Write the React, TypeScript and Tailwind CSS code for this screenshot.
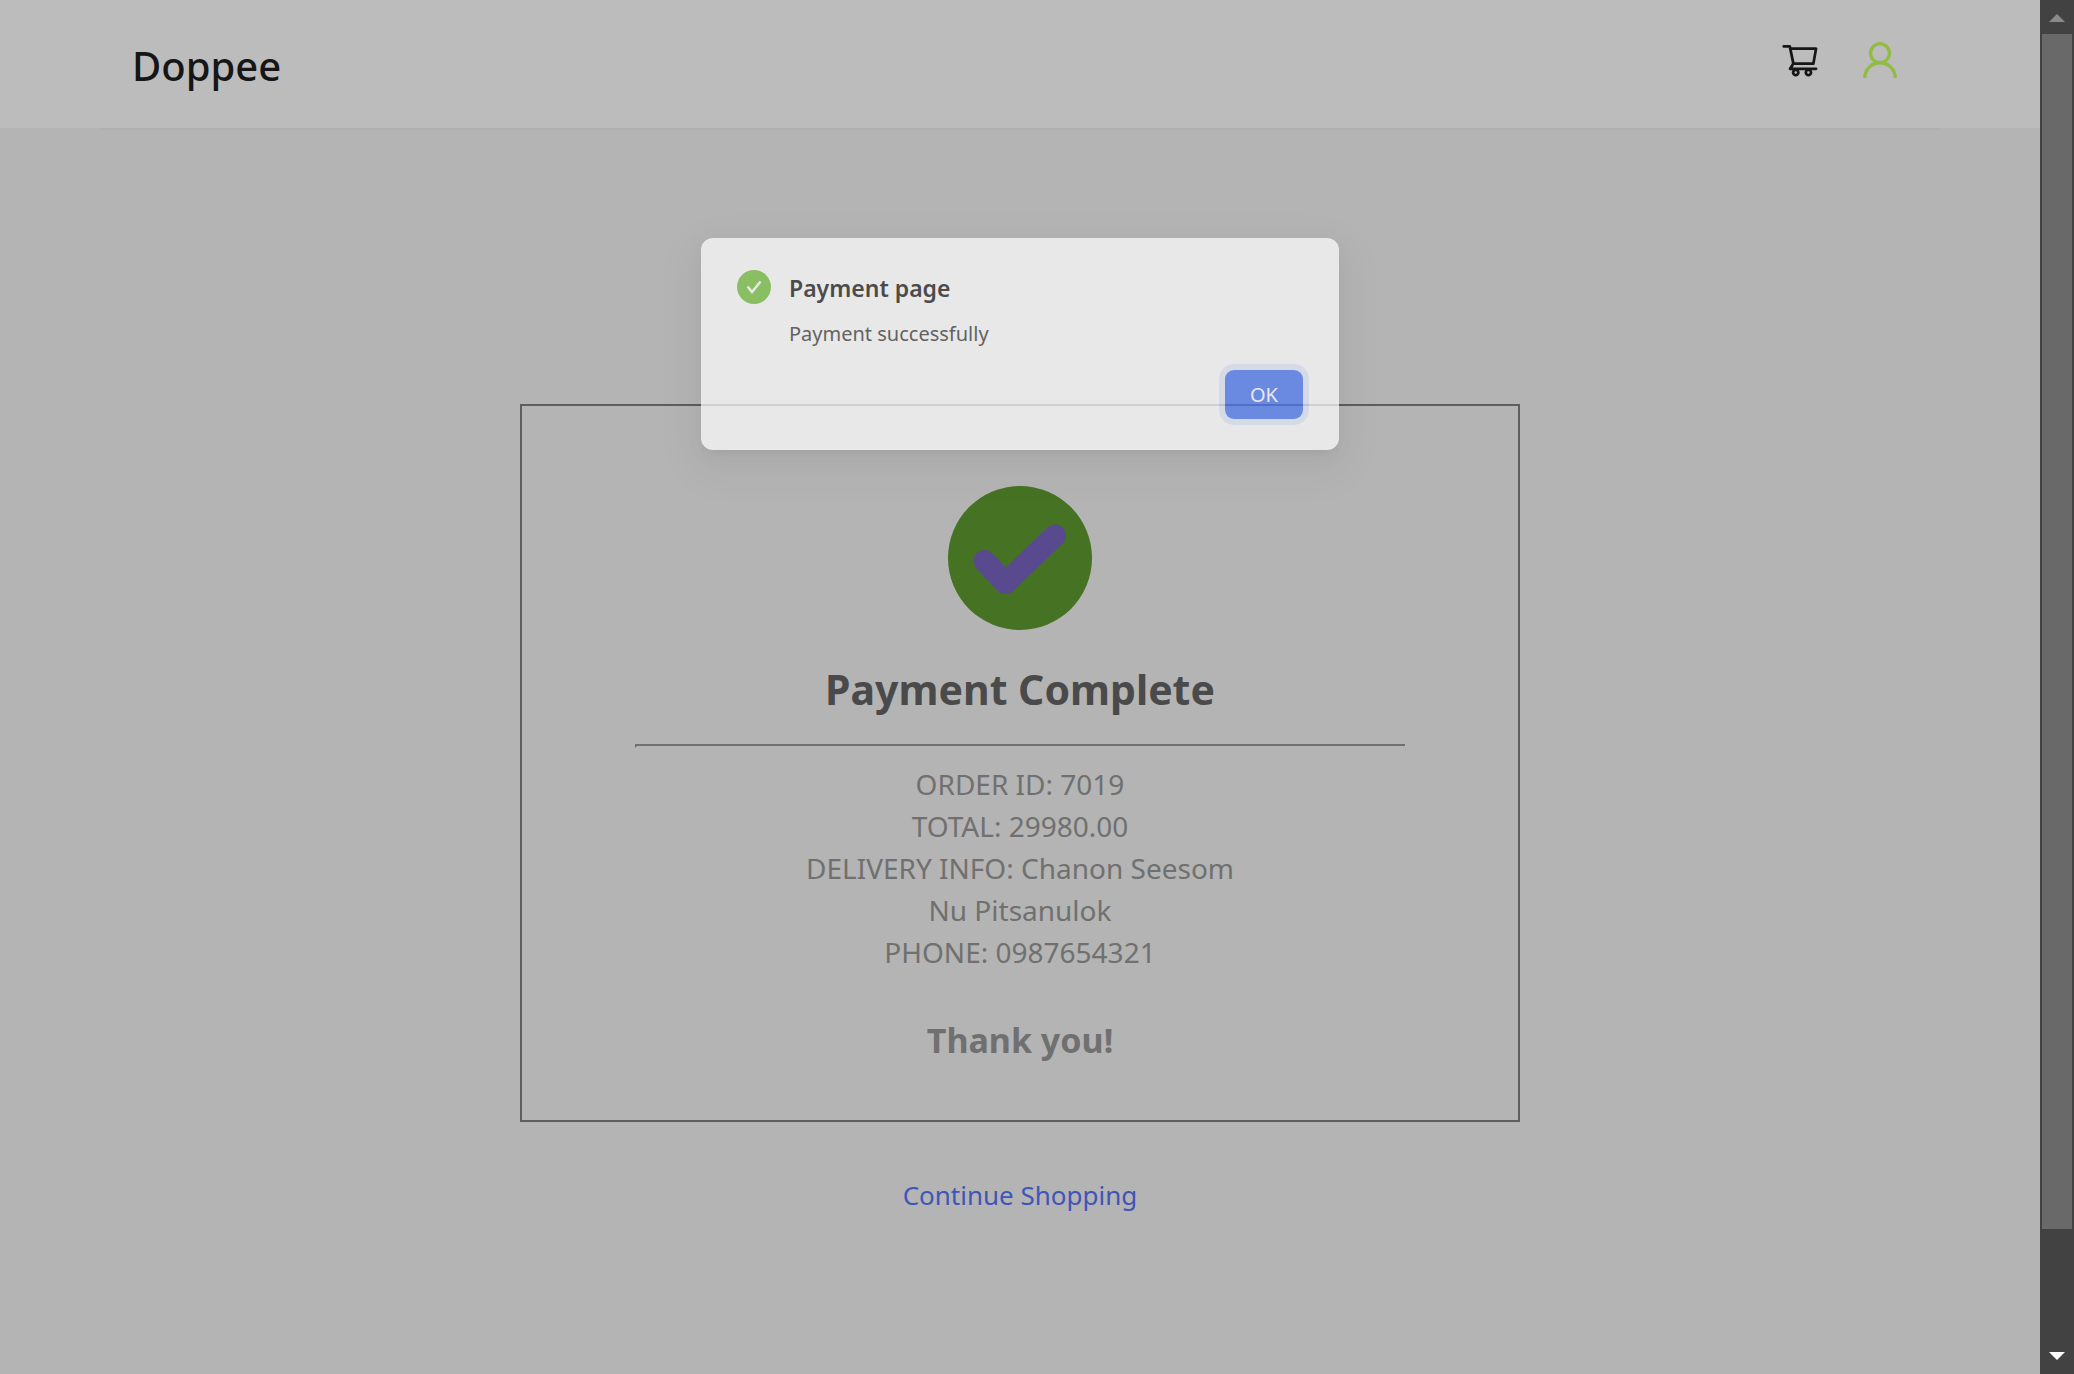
import { AiOutlineShoppingCart, AiOutlineUser } from "react-icons/ai";

const orderLines = [
  "ORDER ID: 7019",
  "TOTAL: 29980.00",
  "DELIVERY INFO: Chanon Seesom",
  "Nu Pitsanulok",
  "PHONE: 0987654321",
];

function Header() {
  return (
    <header>
      <div className="flex h-32 items-start justify-between bg-[#bcbcbc] px-[132px]">
        <a href="#home" className="pt-9 text-[40px] leading-[60px] font-medium text-[#161616]">
          Doppee
        </a>
        <nav className="flex items-center gap-[37px] pt-[37px] pr-[5px]">
          <a href="#cart" aria-label="Shopping cart" className="text-[#161616]">
            <AiOutlineShoppingCart size={40} />
          </a>
          <a href="#account" aria-label="Account" className="text-[#91bd43]">
            <AiOutlineUser size={46} />
          </a>
        </nav>
      </div>
      <div className="mx-[100px] h-0.5 bg-[#b0b0b0]" />
    </header>
  );
}

function Receipt() {
  return (
    <section className="flex w-full max-w-[1000px] flex-col items-center border-2 border-[#5e5e5e] pt-20 pb-[55px] text-center">
      <svg viewBox="0 0 144 144" className="size-36" aria-hidden="true">
        <circle cx="72" cy="72" r="72" fill="#457223" />
        <path
          d="M36.5 75 57.5 97 107 49.5"
          fill="none"
          stroke="#594a8f"
          strokeWidth="22"
          strokeLinecap="round"
          strokeLinejoin="round"
        />
      </svg>
      <h1 className="mt-[31px] text-[41px] leading-[56px] font-bold text-[#4a4a4a]">Payment Complete</h1>
      <hr className="mt-[27px] w-[770px] max-w-full border-t-2 border-l-2 border-b-2 border-[#707070] border-b-transparent" />
      <div className="mt-[15px] text-[28px] leading-[42px] text-[#707070]">
        {orderLines.map((line) => (
          <p key={line}>{line}</p>
        ))}
      </div>
      <h2 className="mt-[42px] text-[34px] leading-[50px] font-bold text-[#707070]">Thank you!</h2>
    </section>
  );
}

function PaymentDialog() {
  return (
    <div
      role="dialog"
      aria-labelledby="dialog-title"
      className="absolute inset-x-0 top-[238px] mx-auto w-[638px] max-w-full rounded-xl bg-white px-9 pt-8 pb-[31px] opacity-70 shadow-[0_9px_24px_0_rgba(0,0,0,0.06),0_5px_9px_-6px_rgba(0,0,0,0.12),0_14px_42px_12px_rgba(0,0,0,0.04)]"
    >
      <div className="flex gap-[18px]">
        <svg viewBox="0 0 34 34" className="size-[34px]" aria-hidden="true">
          <circle cx="17" cy="17" r="17" fill="#79c342" />
          <path d="M10.5 16.5 15 22 23.5 11.5" fill="none" stroke="#fff" strokeWidth="2.4" />
        </svg>
        <div>
          <h2 id="dialog-title" className="text-[23px] leading-9 font-semibold text-[#202020]">
            Payment page
          </h2>
          <p className="mt-3 text-[20px] leading-8 text-[#404040]">Payment successfully</p>
        </div>
      </div>
      <div className="mt-5 flex justify-end">
        <button
          type="button"
          className="h-[49px] w-[78px] rounded-[9px] bg-[#4c77f3] text-[20px] text-white ring-6 ring-[#4c77f3]/15"
        >
          OK
        </button>
      </div>
    </div>
  );
}

function ScrollBar() {
  return (
    <div className="flex w-[34px] shrink-0 flex-col bg-[#424242]" aria-hidden="true">
      <div className="flex h-[34px] justify-center pt-3.5">
        <svg viewBox="0 0 16 8" className="h-2 w-4" fill="#8a8a8a">
          <path d="M0 8 8 0l8 8z" />
        </svg>
      </div>
      <div className="mx-0.5 flex-1 bg-[#696969]" />
      <div className="flex h-[145px] items-end justify-center pb-3.5">
        <svg viewBox="0 0 16 8" className="h-2 w-4" fill="#fff">
          <path d="M0 0h16L8 8z" />
        </svg>
      </div>
    </div>
  );
}

export default function App() {
  return (
    <div className="flex min-h-screen bg-[#b4b4b4] font-['Noto_Sans','Segoe_UI',sans-serif]">
      <div className="relative min-w-0 flex-1">
        <Header />
        <main className="flex flex-col items-center pt-[274px]">
          <Receipt />
          <a href="#shop" className="mt-[52px] text-[26px] leading-[42px] text-[#3f56b8]">
            Continue Shopping
          </a>
        </main>
        <PaymentDialog />
      </div>
      <ScrollBar />
    </div>
  );
}
